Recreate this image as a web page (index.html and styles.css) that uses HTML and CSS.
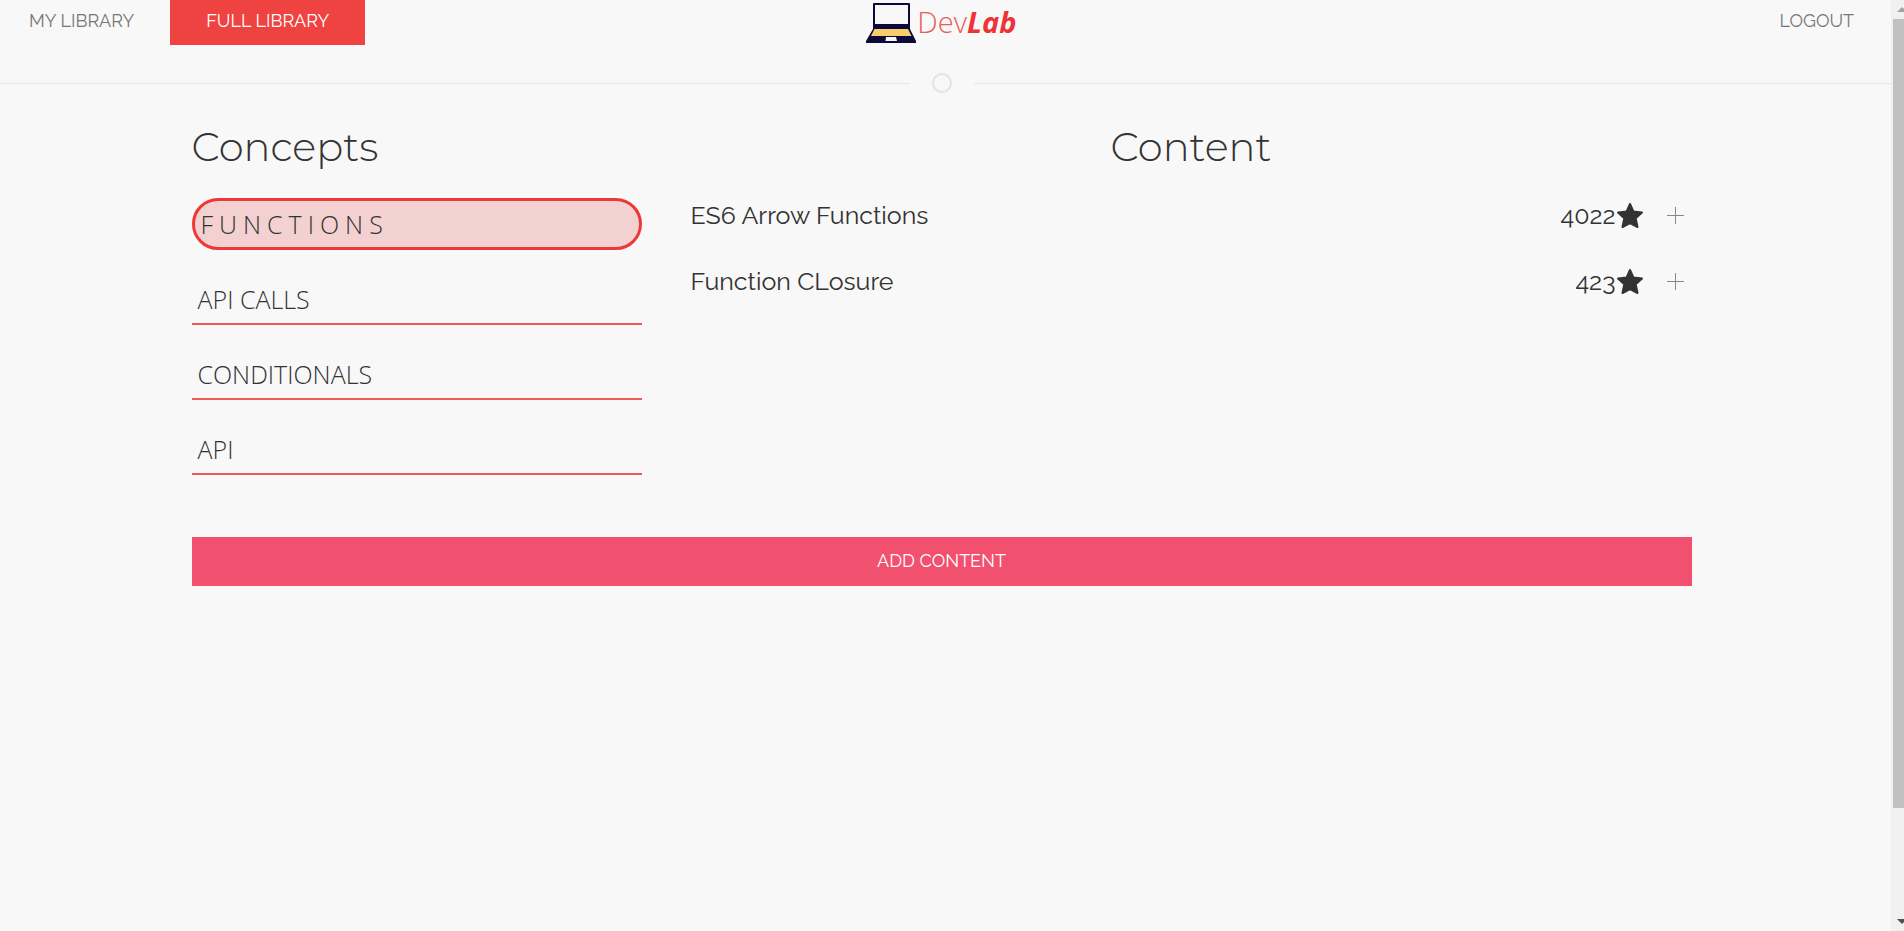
FILE: index.html
```html
<!DOCTYPE html>
<html lang="en">
<head>
<meta charset="utf-8">
<title>DevLab</title>
<link rel="stylesheet" href="styles.css">
</head>
<body>
<div class="page">
  <header class="header">
    <nav class="nav nav-left">
      <a class="nav-link" href="#">MY LIBRARY</a>
      <a class="nav-link active" href="#">FULL LIBRARY</a>
    </nav>
    <a class="logo" href="#">
      <svg class="logo-icon" viewBox="0 0 50 40" aria-hidden="true">
        <path d="M8 0H43Q44 0 44 1V26L50 38V40H0V38L7 26V1Q7 0 8 0Z" fill="#0c0a3a"/>
        <path d="M9 2H42V21H9Z" fill="#f8f8f8"/>
        <path d="M8.500 26H42L45.500 33H5Z" fill="#f8ce6c"/>
        <path d="M20 34H30L31 38H19.500Z" fill="#f8f8f8"/>
      </svg>
      <span class="logo-text">Dev<b>Lab</b></span>
    </a>
    <nav class="nav nav-right">
      <a class="nav-link" href="#">LOGOUT</a>
    </nav>
  </header>
  <div class="divider"><span class="divider-ring"></span></div>
  <main class="main">
    <div class="columns">
      <section class="concepts">
        <h1 class="title">Concepts</h1>
        <div class="concept-list">
          <button class="concept selected" type="button">FUNCTIONS</button>
          <button class="concept" type="button">API CALLS</button>
          <button class="concept" type="button">CONDITIONALS</button>
          <button class="concept" type="button">API</button>
        </div>
      </section>
      <section class="content">
        <h1 class="title">Content</h1>
        <ul class="items">
          <li class="item">
            <span class="item-name">ES6 Arrow Functions</span>
            <span class="votes">4022</span>
            <svg class="star" viewBox="0 0 26 25" aria-hidden="true"><path d="M13 1L16.500 8.600L25 9.600L18.700 15.300L20.500 24L13 20L5.500 24L7.300 15.300L1 9.600L9.500 8.600Z"/></svg>
            <button class="add" type="button" aria-label="Add ES6 Arrow Functions"><svg class="plus" viewBox="0 0 17 17" aria-hidden="true"><path d="M8.500 0V17M0 8.500H17"/></svg></button>
          </li>
          <li class="item">
            <span class="item-name">Function CLosure</span>
            <span class="votes">423</span>
            <svg class="star" viewBox="0 0 26 25" aria-hidden="true"><path d="M13 1L16.500 8.600L25 9.600L18.700 15.300L20.500 24L13 20L5.500 24L7.300 15.300L1 9.600L9.500 8.600Z"/></svg>
            <button class="add" type="button" aria-label="Add Function CLosure"><svg class="plus" viewBox="0 0 17 17" aria-hidden="true"><path d="M8.500 0V17M0 8.500H17"/></svg></button>
          </li>
        </ul>
      </section>
    </div>
    <button class="add-content" type="button">ADD CONTENT</button>
  </main>
</div>
<div class="scrollbar" aria-hidden="true">
  <svg class="arrow" viewBox="0 0 11 19"><path d="M4 12L9 7L14 12Z" fill="#a3a3a3"/></svg>
  <div class="thumb"></div>
  <div class="track-rest"></div>
  <svg class="arrow" viewBox="0 0 11 19"><path d="M4 7H14L9 12Z" fill="#505050"/></svg>
</div>
</body>
</html>
```
FILE: styles.css
```css
* { box-sizing: border-box; }
body {
  margin: 0;
  display: flex;
  min-height: 100vh;
  background: #f8f8f8;
  color: #333;
  font-family: Raleway, Lato, sans-serif;
}
button { font: inherit; color: inherit; background: none; border: 0; padding: 0; cursor: pointer; }
.page { flex: 1; min-width: 0; }
.header {
  display: grid;
  grid-template-columns: 1fr auto 1fr;
  padding-right: 8px;
  height: 45px;
}
.nav { display: flex; }
.nav-right { justify-content: flex-end; }
.nav-link {
  padding: 0 36px;
  font-size: 18px;
  line-height: 41px;
  color: #777;
  text-decoration: none;
}
.nav-left .nav-link:first-child { padding-left: 29px; }
.nav-right .nav-link { padding-right: 29px; }
.nav-link.active { background: #ee4340; color: #fff; }
.logo { display: flex; gap: 1px; text-decoration: none; }
.logo-icon { width: 50px; height: 40px; margin-top: 3px; }
.logo-text {
  font-family: "Open Sans", "Noto Sans", sans-serif;
  font-size: 29px;
  line-height: 44px;
  font-weight: 300;
  color: #ea5b5b;
}
.logo-text b { font-weight: 700; font-style: italic; color: #ee3338; }
.divider {
  display: flex;
  align-items: center;
  justify-content: center;
  gap: 22px;
  margin-top: 28px;
}
.divider::before, .divider::after { content: ""; height: 1px; background: #e5e5e5; flex: 1; }
.divider::after { flex-basis: 8px; }
.divider-ring { width: 20px; height: 20px; border: 2px solid #e2e2e2; border-radius: 50%; }
.main { max-width: 1508px; margin: 0 auto; padding-right: 8px; }
.columns { display: grid; grid-template-columns: 30% 1fr; column-gap: 49px; }
.title {
  margin: 29px 0 26px;
  font-family: Montserrat, Inter, sans-serif;
  font-size: 40px;
  font-weight: 300;
  line-height: 50px;
}
.content .title { text-align: center; }
.concept-list { display: flex; flex-direction: column; gap: 22px; }
.concept {
  padding: 3px 6px 0;
  text-align: left;
  font-family: "Open Sans", "Noto Sans", sans-serif;
  font-size: 25px;
  font-weight: 300;
  line-height: 48px;
  border-bottom: 2px solid #ec5c57;
}
.concept.selected {
  padding: 0 6px;
  line-height: 46px;
  border: 3px solid #ee3835;
  border-radius: 26px;
  background: #f3d1d0;
  letter-spacing: 6px;
}
.items { list-style: none; margin: 0; padding: 0; }
.item { display: flex; align-items: center; height: 34px; margin-bottom: 32px; font-size: 25px; }
.item-name { flex: 1; }
.star { width: 26px; height: 25px; fill: #333; stroke: #333; stroke-width: 2; stroke-linejoin: round; margin-left: 1px; }
.add { display: flex; margin: 0 8px 0 24px; }
.plus { width: 17px; height: 17px; stroke: #888; stroke-width: 1; }
.add-content {
  display: block;
  width: 100%;
  margin-top: 62px;
  background: #f1506e;
  color: #fff;
  font-size: 18px;
  line-height: 48px;
  padding-bottom: 1px;
}
.scrollbar {
  display: flex;
  flex-direction: column;
  width: 13px;
  padding-left: 2px;
  background: #f0f0f0;
}
.arrow { width: 11px; height: 19px; }
.thumb { flex: 789; background: #c1c1c1; }
.track-rest { flex: 104; }
```
